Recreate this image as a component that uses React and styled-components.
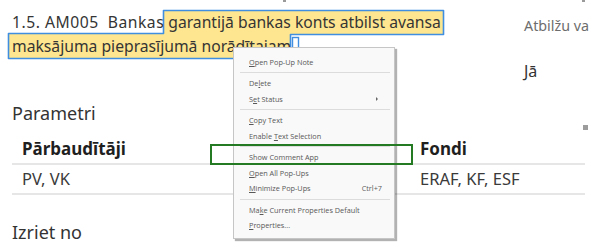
import React from 'react';
import styled, { createGlobalStyle } from 'styled-components';

const Global = createGlobalStyle`
  html, body { margin: 0; padding: 0; background: #fff; }
  body { font-family: "Noto Sans", "Open Sans", sans-serif; color: #333; }
`;

const Page = styled.div`
  position: relative;
  width: 600px;
  height: 251px;
  overflow: hidden;
  background: #fff;
`;

const MarkStrip = styled.div`
  display: flex;
  height: 0;
`;

const Mark = styled.span`
  display: block;
  width: 3px;
  height: 2px;
  background: #9a9a9a;
  margin-left: ${p => p.$offset}px;
  flex: none;
`;

const TopRow = styled.div`
  display: flex;
`;

const TitleBlock = styled.div`
  position: relative;
  width: 524px;
  flex: none;
  padding: 10px 0 0 12px;
  box-sizing: border-box;
`;

const HighlightShape = styled.svg`
  position: absolute;
  left: 0;
  top: 0;
  z-index: 0;
  pointer-events: none;
`;

const Title = styled.div`
  position: relative;
  z-index: 1;
  font-size: 15.7px;
  line-height: 24px;
  color: #353535;
  white-space: nowrap;
`;

const Prefix = styled.span`
  letter-spacing: 0.5px;
`;

const Side = styled.div`
  width: 70px;
  white-space: nowrap;
  padding-top: 16px;
`;

const SideLabel = styled.div`
  font-size: 14.3px;
  line-height: 20px;
  color: #6d6d6d;
`;

const SideValue = styled.div`
  margin-top: 25px;
  font-size: 16px;
  line-height: 20px;
  color: #333;
`;

const SectionRow = styled.div`
  display: flex;
  align-items: flex-start;
  justify-content: space-between;
  width: 576px;
  padding-left: 12px;
  margin-top: ${p => p.$top}px;
`;

const SectionTitle = styled.div`
  font-size: 18px;
  line-height: 24px;
  color: #333;
`;

const Square = styled.span`
  display: block;
  width: 5px;
  height: 5px;
  background: #9c9c9c;
  margin-top: 24px;
`;

const Table = styled.div`
  margin: 5px 0 0 12px;
  width: 573px;
  display: grid;
  grid-template-columns: 398px 1fr;
`;

const Cell = styled.div`
  padding-left: 10px;
  height: 28px;
  line-height: 28px;
  border-bottom: 2px solid #e6e6e6;
  font-size: ${p => (p.$head ? 17 : 16.5)}px;
  font-weight: ${p => (p.$head ? 700 : 400)};
  color: ${p => (p.$head ? '#1f1f1f' : '#3a3a3a')};
  white-space: nowrap;
`;

const Menu = styled.div`
  position: absolute;
  left: 233px;
  top: 47px;
  width: 162px;
  box-sizing: border-box;
  padding: 6px 0 5px;
  background: #f9f9f9;
  border: 1px solid #c6c6c6;
  box-shadow: 2px 2px 1px rgba(0, 0, 0, 0.3);
  font-family: "Open Sans", "Noto Sans", sans-serif;
  font-size: 7.3px;
  color: #585858;
  z-index: 5;
`;

const Item = styled.div`
  display: flex;
  align-items: center;
  justify-content: space-between;
  height: 15.5px;
  padding: 0 12px 0 15px;
  white-space: nowrap;
`;

const Key = styled.span`
  color: #5e5e5e;
`;

const Arrow = styled.span`
  width: 0;
  height: 0;
  border-top: 2px solid transparent;
  border-bottom: 2px solid transparent;
  border-left: 2.5px solid #666;
  margin-right: 4px;
`;

const Sep = styled.div`
  height: 1px;
  background: #dcdcdc;
  margin: 2.5px 4px 2.5px 6px;
`;

const U = styled.span`
  text-decoration: underline;
  text-underline-offset: 1px;
`;

const FocusBox = styled.div`
  position: absolute;
  left: 210px;
  top: 144px;
  width: 203px;
  height: 21px;
  box-sizing: border-box;
  border: 2.5px solid #237a23;
  z-index: 6;
`;

const items = [
  { label: <><U>O</U>pen Pop-Up Note</> },
  'sep',
  { label: <>De<U>l</U>ete</> },
  { label: <>S<U>e</U>t Status</>, sub: true },
  'sep',
  { label: <><U>C</U>opy Text</> },
  { label: <>Enable <U>T</U>ext Selection</> },
  'sep',
  { label: <>Show Comment App</> },
  { label: <><U>O</U>pen All Pop-Ups</> },
  { label: <><U>M</U>inimize Pop-Ups</>, key: 'Ctrl+7' },
  'sep',
  { label: <>Ma<U>k</U>e Current Properties Default</> },
  { label: <><U>P</U>roperties...</> },
];

export default function App() {
  return (
    <>
      <Global />
      <Page>
        <MarkStrip>
          <Mark $offset={283} />
          <Mark $offset={296} />
        </MarkStrip>
        <TopRow>
          <TitleBlock>
            <HighlightShape width="460" height="62" viewBox="0 0 460 62">
              <path
                d="M163.5 10.5 H443.5 V34.5 H290.5 V58.5 H8.5 V33.5 H163.5 Z"
                fill="#fde68f"
                stroke="#3f8ee0"
                strokeWidth="1.6"
                strokeLinejoin="round"
              />
              <rect x="292.5" y="37.5" width="6" height="21" fill="#fff" stroke="#3f8ee0" strokeWidth="1.4" />
            </HighlightShape>
            <Title>
              <Prefix>{'1.5. AM005\u00a0 Bankas'}</Prefix>
              {' garantijā bankas konts atbilst avansa'}
              <br />
              {'maksājuma pieprasījumā norādītajam'}
            </Title>
          </TitleBlock>
          <Side>
            <SideLabel>Atbilžu va</SideLabel>
            <SideValue>Jā</SideValue>
          </Side>
        </TopRow>
        <SectionRow $top={20}>
          <SectionTitle>Parametri</SectionTitle>
          <Square />
        </SectionRow>
        <Table>
          <Cell $head>Pārbaudītāji</Cell>
          <Cell $head>Fondi</Cell>
          <Cell>PV, VK</Cell>
          <Cell>ERAF, KF, ESF</Cell>
        </Table>
        <SectionRow $top={25}>
          <SectionTitle>Izriet no</SectionTitle>
        </SectionRow>
        <Menu>
          {items.map((it, i) =>
            it === 'sep' ? (
              <Sep key={i} />
            ) : (
              <Item key={i}>
                <span>{it.label}</span>
                {it.sub && <Arrow />}
                {it.key && <Key>{it.key}</Key>}
              </Item>
            )
          )}
        </Menu>
        <FocusBox />
      </Page>
    </>
  );
}
